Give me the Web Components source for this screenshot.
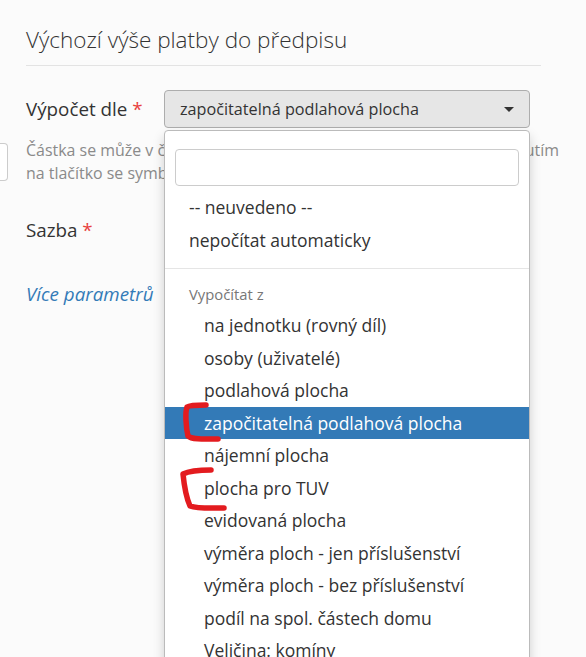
<!DOCTYPE html>
<html lang="cs">
<head>
<meta charset="utf-8">
<title>Výchozí výše platby</title>
<style>
    html,body{
        margin:0;
        height:657px;
        overflow:hidden;
        background:#fbfbfb;
        color:#333;
        font-family:"Open Sans",sans-serif;
    }
</style>
</head>
<body>
<payment-form>
    <span slot="title">Výchozí výše platby do předpisu</span>
    <form-row label="Výpočet dle" required>
        <bs-select value="započitatelná podlahová plocha"></bs-select>
    </form-row>
    <help-note>Částka se může v čase změnit podle zadaných parametrů, a to kliknutím<br>na tlačítko se symbolem lze upravit její výpočet</help-note>
    <form-row label="Sazba" required class="rate"><rate-input></rate-input></form-row>
    <a slot="more" href="#">Více parametrů</a>
</payment-form>

<script>
const formStyle=`
    :host{
        display:block;
        position:relative;
        padding:0 45px 0 26px;
        height:657px;
        box-sizing:border-box;
    }
    .title{
        font-weight:300;
        font-size:22.5px;
        line-height:31px;
        padding-top:24px;
        padding-bottom:10px;
        border-bottom:1px solid #e3e3e3;
        margin-bottom:24px;
    }
    .more{
        margin-top:32px;
        font-size:18.8px;
        line-height:26px;
        font-style:italic;
    }
    ::slotted(a){
        color:#337ab7;
        text-decoration:none;
    }
`
class PaymentForm extends HTMLElement{
    constructor(){
        super()
        this._shadowRoot = this.attachShadow({mode:'open'})
    }
    connectedCallback(){
        this._shadowRoot.innerHTML=`
        <style>${formStyle}</style>
        <div class="title"><slot name="title"></slot></div>
        <slot></slot>
        <div class="more"><slot name="more"></slot></div>
        `
    }
}

class FormRow extends HTMLElement{
    constructor(){
        super()
        this._shadowRoot = this.attachShadow({mode:'open'})
    }
    connectedCallback(){
        const star=this.hasAttribute('required') ? '<span class="star">*</span>' : ''
        this._shadowRoot.innerHTML=`
        <style>
            :host{
                display:flex;
                align-items:center;
                font-size:18.8px;
                line-height:24px;
            }
            :host(.rate){
                margin-top:26px;
            }
            .label{
                width:138px;
                flex:none;
            }
            .star{
                color:#e8403f;
            }
            .control{
                flex:1;
                min-width:0;
                margin-right:11px;
            }
        </style>
        <div class="label">${this.getAttribute('label')} ${star}</div>
        <div class="control"><slot></slot></div>
        `
    }
}

class HelpNote extends HTMLElement{
    constructor(){
        super()
        this._shadowRoot = this.attachShadow({mode:'open'})
    }
    connectedCallback(){
        this._shadowRoot.innerHTML=`
        <style>
            :host{
                display:flex;
                align-items:flex-start;
                margin:11px -30px 0 -26px;
                font-size:15.95px;
                line-height:23px;
                color:#8a8a8a;
                white-space:nowrap;
            }
            .stub{
                flex:none;
                width:7px;
                height:36px;
                margin:4px 18px 0 0;
                background:#fff;
                border:1px solid #ccc;
                border-left:0;
                border-radius:0 4px 4px 0;
            }
        </style>
        <div class="stub"></div>
        <div><slot></slot></div>
        `
    }
}

class RateInput extends HTMLElement{
    constructor(){
        super()
        this._shadowRoot = this.attachShadow({mode:'open'})
    }
    connectedCallback(){
        this._shadowRoot.innerHTML=`
        <style>
            :host{
                display:block;
                height:36px;
                background:#fff;
                border:1px solid #ccc;
                border-radius:4px;
            }
        </style>
        `
    }
}

const OPTIONS=[
    {text:'-- neuvedeno --'},
    {text:'nepočítat automaticky'},
    {divider:true},
    {header:'Vypočítat z'},
    {text:'na jednotku (rovný díl)',sub:true},
    {text:'osoby (uživatelé)',sub:true},
    {text:'podlahová plocha',sub:true},
    {text:'započitatelná podlahová plocha',sub:true,active:true},
    {text:'nájemní plocha',sub:true},
    {text:'plocha pro TUV',sub:true},
    {text:'evidovaná plocha',sub:true},
    {text:'výměra ploch - jen příslušenství',sub:true},
    {text:'výměra ploch - bez příslušenství',sub:true},
    {text:'podíl na spol. částech domu',sub:true},
    {text:'Veličina: komíny',sub:true}
]

class BsSelect extends HTMLElement{
    constructor(){
        super()
        this._shadowRoot = this.attachShadow({mode:'open'})
    }
    connectedCallback(){
        const items=OPTIONS.map(o=>{
            if(o.divider) return '<li class="divider"></li>'
            if(o.header) return `<li class="header">${o.header}</li>`
            return `<li class="item${o.sub?' sub':''}${o.active?' active':''}">${o.text}</li>`
        }).join('')
        this._shadowRoot.innerHTML=`
        <style>
            :host{
                display:block;
                position:relative;
            }
            .toggle{
                display:flex;
                align-items:center;
                justify-content:space-between;
                height:36px;
                padding:0 15px;
                background:#e6e6e6;
                border:1px solid #adadad;
                border-radius:4px;
                font-size:16.2px;
            }
            .caret{
                width:0;
                height:0;
                border-top:5px solid #333;
                border-left:5px solid transparent;
                border-right:5px solid transparent;
            }
            .menu{
                position:absolute;
                top:40px;
                left:0;
                right:0;
                height:560px;
                box-sizing:border-box;
                background:#fff;
                border:1px solid #bbb;
                border-radius:4px;
                box-shadow:0 6px 12px rgba(0,0,0,.175);
                overflow:hidden;
                z-index:5;
            }
            .search{
                height:35px;
                margin:18px 10px 5px 10px;
                background:#fff;
                border:1px solid #ccc;
                border-radius:4px;
            }
            ul{
                list-style:none;
                margin:0;
                padding:0;
                font-size:17.5px;
            }
            .item{
                height:32.5px;
                line-height:32.2px;
                padding-left:24px;
                white-space:nowrap;
            }
            .item.sub{
                padding-left:39px;
            }
            .active{
                background:#337ab7;
                color:#fff;
            }
            .divider{
                height:1px;
                margin:12px 0 10px;
                background:#e5e5e5;
            }
            .header{
                height:30px;
                line-height:31px;
                padding-left:24px;
                font-size:14.8px;
                color:#777;
            }
        </style>
        <div class="toggle"><span>${this.getAttribute('value')}</span><span class="caret"></span></div>
        <div class="menu">
            <div class="search"></div>
            <ul>${items}</ul>
        </div>
        `
    }
}

class PenMarks extends HTMLElement{
    constructor(){
        super()
        this._shadowRoot = this.attachShadow({mode:'open'})
    }
    connectedCallback(){
        this._shadowRoot.innerHTML=`
        <style>
            :host{
                position:absolute;
                left:0;
                top:0;
                z-index:10;
            }
            svg{
                display:block;
            }
        </style>
        <svg width="586" height="657" fill="none" stroke="#e31b1f" stroke-width="5.5" stroke-linecap="round" stroke-linejoin="round">
            <path d="M206 405C197 405 190 405 187 407C185 412 186 428 188 436C192 440 207 439 218 439"/>
            <path d="M211 470C200 470 189 471 183 474C184 484 186 497 190 506C198 509 212 508 224 508"/>
        </svg>
        `
    }
}

window.customElements.define('payment-form',PaymentForm)
window.customElements.define('form-row',FormRow)
window.customElements.define('help-note',HelpNote)
window.customElements.define('rate-input',RateInput)
window.customElements.define('bs-select',BsSelect)
window.customElements.define('pen-marks',PenMarks)
document.body.appendChild(document.createElement('pen-marks'))
</script>
</body>
</html>
